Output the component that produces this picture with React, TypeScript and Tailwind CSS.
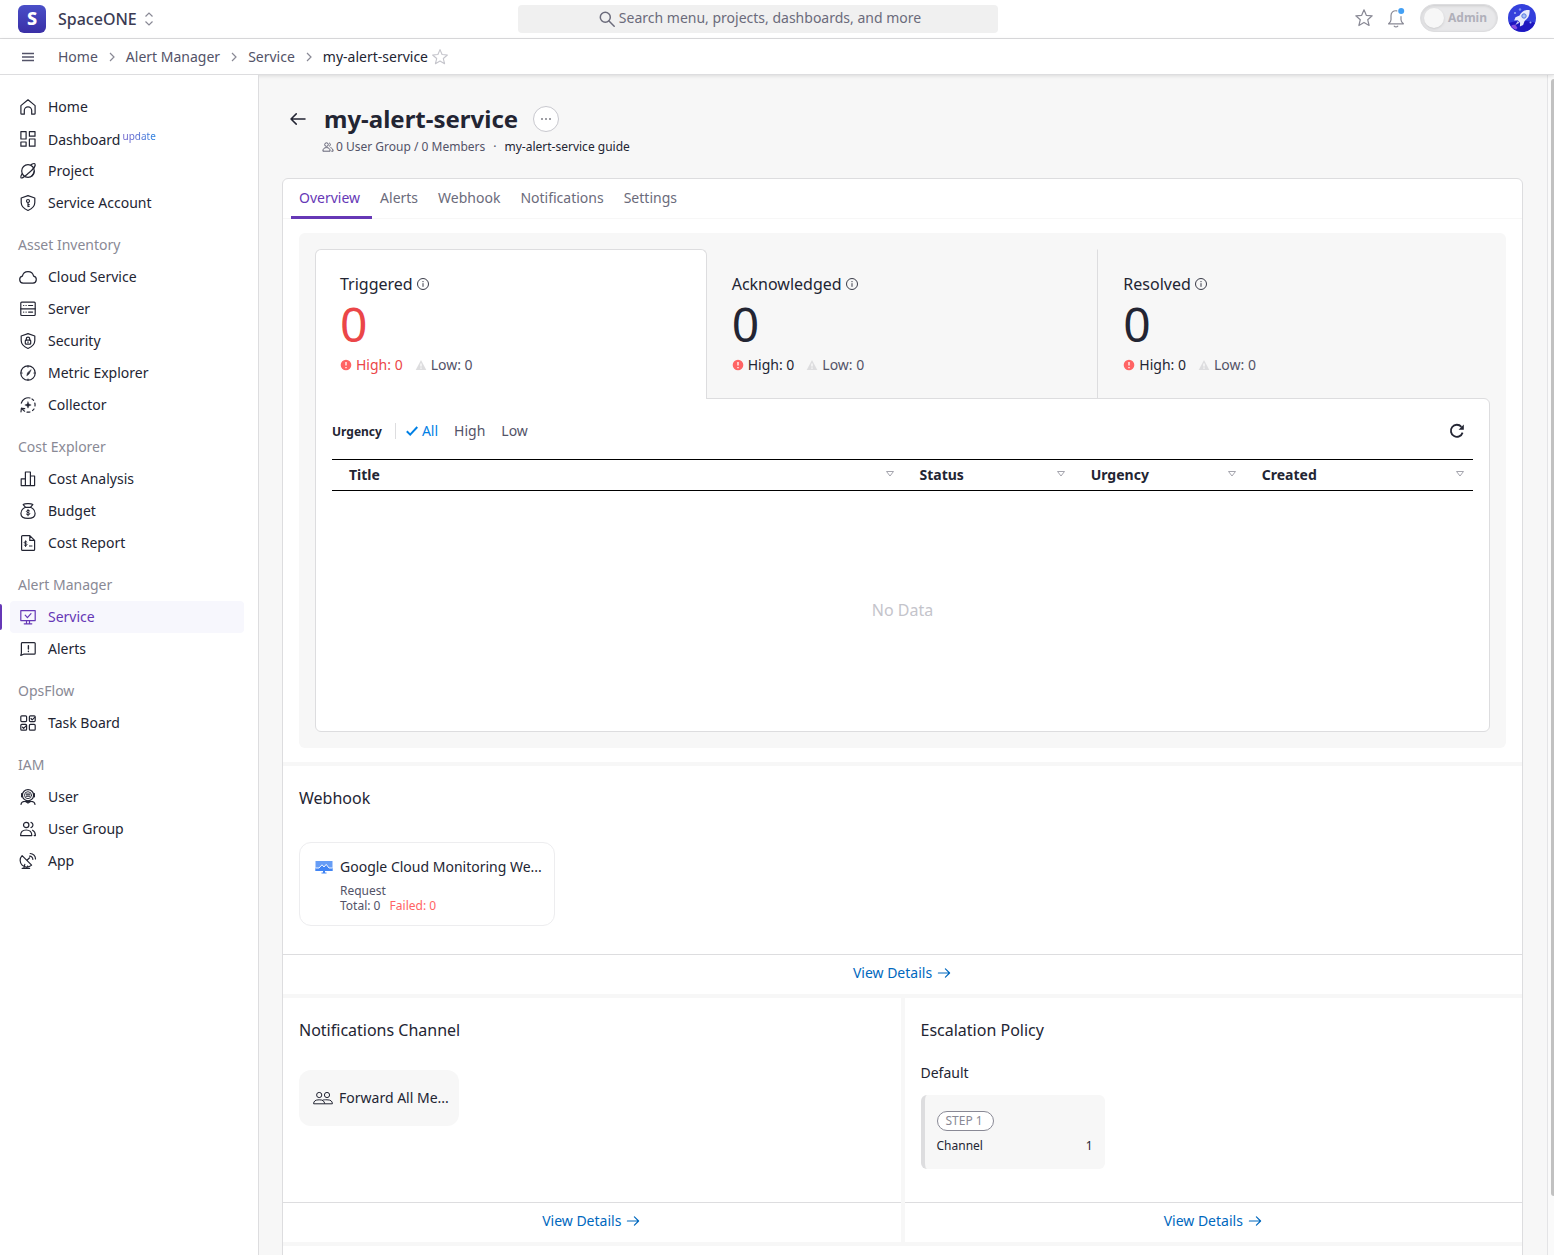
import React from "react";

interface IconProps {
  className?: string;
}

interface MenuItem {
  label: string;
  icon: React.ReactNode;
  tag?: string;
  active?: boolean;
}

interface MenuSection {
  title?: string;
  items: MenuItem[];
}

function LineIcon({ children }: { children: React.ReactNode }) {
  return (
    <svg
      viewBox="0 0 20 20"
      className="h-5 w-5 shrink-0"
      fill="none"
      stroke="currentColor"
      strokeWidth="1.2"
      strokeLinecap="round"
      strokeLinejoin="round"
      aria-hidden="true"
    >
      {children}
    </svg>
  );
}

const SHIELD = "M10 2.6 16.8 5v4.6c0 3.6-2.8 6.3-6.8 7.9-4-1.6-6.8-4.3-6.8-7.9V5z";

const MENU: MenuSection[] = [
  {
    items: [
      {
        label: "Home",
        icon: (
          <LineIcon>
            <path d="M2.9 8.6 10 2.8l7.1 5.8v7.8a.8.8 0 0 1-.8.8h-2.6v-3.6a3.7 3.7 0 0 0-7.4 0v3.6H3.7a.8.8 0 0 1-.8-.8z" />
          </LineIcon>
        ),
      },
      {
        label: "Dashboard",
        tag: "update",
        icon: (
          <LineIcon>
            <rect x="2.9" y="2.6" width="5.2" height="7.4" />
            <rect x="11.4" y="2.6" width="5.6" height="4.6" />
            <rect x="2.9" y="13" width="5.2" height="4.2" />
            <rect x="11.4" y="10" width="5.6" height="7.2" />
          </LineIcon>
        ),
      },
      {
        label: "Project",
        icon: (
          <LineIcon>
            <circle cx="10" cy="10" r="6.3" />
            <path d="M13.2 3.6c2-1.1 3.4-1.3 3.8-.6.9 1.5-1.8 5.4-6 8.8-4.2 3.4-7.2 6.2-8.1 4.9-.4-.7 0-2 1-3.6" />
            <path d="M13.8 15c1.3-1.3 2.3-3 2.5-5" />
          </LineIcon>
        ),
      },
      {
        label: "Service Account",
        icon: (
          <LineIcon>
            <path d={SHIELD} />
            <circle cx="10" cy="8" r="1.5" />
            <path d="M10 9.6v4M10 11.7h1.2M10 13.5h1.2" />
          </LineIcon>
        ),
      },
    ],
  },
  {
    title: "Asset Inventory",
    items: [
      {
        label: "Cloud Service",
        icon: (
          <LineIcon>
            <path d="M5 16.1a3.5 3.5 0 0 1-.6-6.9 5.7 5.7 0 0 1 11.2 0 3.5 3.5 0 0 1-.6 6.9z" />
          </LineIcon>
        ),
      },
      {
        label: "Server",
        icon: (
          <LineIcon>
            <rect x="2.8" y="3.1" width="14.4" height="13.4" rx="1" />
            <path d="M2.8 9.8h14.4M5.6 6.5h.2M8 6.5h.2M10.6 6.5h4M5.6 13.1h.2M8 13.1h.2M10.6 13.1h4" />
          </LineIcon>
        ),
      },
      {
        label: "Security",
        icon: (
          <LineIcon>
            <path d={SHIELD} />
            <rect x="7.3" y="9.2" width="5.4" height="4" rx=".8" />
            <path d="M8.3 9V7.8a1.7 1.7 0 0 1 3.4 0V9M10 10.8v.8" />
          </LineIcon>
        ),
      },
      {
        label: "Metric Explorer",
        icon: (
          <LineIcon>
            <circle cx="10" cy="10" r="7.2" />
            <path d="M10 3.1v1M10 16v1M3.1 10h1M16 10h1" />
            <path d="m13 7-2 4-2.2 1.7L9.5 10z" fill="currentColor" strokeWidth=".6" />
          </LineIcon>
        ),
      },
      {
        label: "Collector",
        icon: (
          <LineIcon>
            <path d="M3.3 8.1A7.2 7.2 0 0 1 12 3M14 4a7 7 0 0 1 1.6 1.4M16.8 8a7 7 0 0 1 .2 3M16 14a7 7 0 0 1-1.5 1.5M12 17a7 7 0 0 1-3 .1M6.6 16.2a7 7 0 0 1-2.8-3M3 16.8l.4-3.5 3.3.4" />
            <path
              d="m10 6.8.9 2.3 2.3.9-2.3.9-.9 2.3-.9-2.3L6.8 10l2.3-.9z"
              fill="currentColor"
              strokeWidth=".4"
            />
          </LineIcon>
        ),
      },
    ],
  },
  {
    title: "Cost Explorer",
    items: [
      {
        label: "Cost Analysis",
        icon: (
          <LineIcon>
            <path d="M3.2 16.6V9.8h4.2M7.4 16.6V3h5v13.6M12.4 7h4.2v9.6H3.2" />
          </LineIcon>
        ),
      },
      {
        label: "Budget",
        icon: (
          <LineIcon>
            <path d="M7.4 6.3C4.4 7.7 2.9 10 2.9 12.4c0 3 2.5 4.9 7.1 4.9s7.1-1.9 7.1-4.9c0-2.4-1.5-4.7-4.5-6.1zM7.4 6.2 5.2 3.6c1.5-1 2.8-.9 4.8-.9s3.3-.1 4.8.9l-2.2 2.6" />
            <path d="M11.7 9.9c-.5-.7-3.3-.8-3.3.6s3.4.7 3.4 2.2-3 1.3-3.5.4M10 8.5v6.3" strokeWidth="1" />
          </LineIcon>
        ),
      },
      {
        label: "Cost Report",
        icon: (
          <LineIcon>
            <path d="M3.6 3.6a1 1 0 0 1 1-1h7.2l4.8 4.8v9a1 1 0 0 1-1 1h-11a1 1 0 0 1-1-1zM11.8 2.8v4.6h4.6" />
            <path d="M8.9 9c-.5-.7-2.7-.6-2.7.6s2.8.7 2.8 2-2.4 1.2-2.9.4M7.6 7.8v5.8M11.4 13h2.6" strokeWidth="1" />
          </LineIcon>
        ),
      },
    ],
  },
  {
    title: "Alert Manager",
    items: [
      {
        label: "Service",
        active: true,
        icon: (
          <LineIcon>
            <rect x="2.8" y="3.6" width="14.4" height="10" />
            <path d="M7.2 8.2 9.4 10.7 13 6.6M8.5 13.8v2.8M11.5 13.8v2.8M6.2 16.8h7.6" />
          </LineIcon>
        ),
      },
      {
        label: "Alerts",
        icon: (
          <LineIcon>
            <path d="M4.2 3.6h12a1 1 0 0 1 1 1v9.6a1 1 0 0 1-1 1H5.6l-2.8 1.2.6-2.2V4.6a1 1 0 0 1 .8-1z" />
            <path d="M10.4 6.6v3.4M10.4 12.3v.2" strokeWidth="1.4" />
          </LineIcon>
        ),
      },
    ],
  },
  {
    title: "OpsFlow",
    items: [
      {
        label: "Task Board",
        icon: (
          <LineIcon>
            <rect x="2.8" y="2.8" width="5.8" height="5.8" rx="1" />
            <rect x="11.4" y="2.8" width="5.8" height="5.8" rx="1" />
            <rect x="2.8" y="11.4" width="5.8" height="5.8" rx="1" />
            <rect x="11.4" y="11.4" width="5.8" height="5.8" rx="1" />
            <path d="m13 5.5 1.2 1.3 2.5-2.5M4.4 14.1l1.2 1.3 2.5-2.5" />
          </LineIcon>
        ),
      },
    ],
  },
  {
    title: "IAM",
    items: [
      {
        label: "User",
        icon: (
          <LineIcon>
            <circle cx="10" cy="8.2" r="5.6" />
            <circle cx="10" cy="8.2" r="3.5" strokeWidth=".9" />
            <path d="M3.6 6.6v3.2M16.4 6.6v3.2M8.4 7.2h3.2M8.4 9.2h3.2M3 17.3c.3-2 1.8-3 4-3h6c2.2 0 3.7 1 4 3M7 14.3l3 1.8 3-1.8" />
          </LineIcon>
        ),
      },
      {
        label: "User Group",
        icon: (
          <LineIcon>
            <circle cx="8.2" cy="6" r="2.7" />
            <path d="M2.6 16.6c0-3.6 2-5.6 5.6-5.6s5.6 2 5.6 5.6zM13 3.4a2.7 2.7 0 0 1 0 5.2M14.6 11.2c1.8.9 2.8 2.8 2.8 5.4h-1.2" />
          </LineIcon>
        ),
      },
      {
        label: "App",
        icon: (
          <LineIcon>
            <path d="M4.1 4.6a6.7 6.7 0 0 0 9.5 9.5zM9 9.2l2.6-2.4M4.2 17.4h7.4M5.8 17.2l1-3.8M10.4 17.2l-.8-2.2" />
            <path d="M11.6 5.2a3 3 0 0 1 3.2 3.2M12.2 2.5a5.4 5.4 0 0 1 5.3 5.5" />
          </LineIcon>
        ),
      },
    ],
  },
];

const CRUMBS = ["Home", "Alert Manager", "Service"];

const TABS = ["Overview", "Alerts", "Webhook", "Notifications", "Settings"];

const ALERT_STATES = [
  { label: "Triggered", total: 0, high: 0, low: 0 },
  { label: "Acknowledged", total: 0, high: 0, low: 0 },
  { label: "Resolved", total: 0, high: 0, low: 0 },
];

const COLUMNS = [
  { label: "Title", width: "w-[50%]" },
  { label: "Status", width: "w-[15%]" },
  { label: "Urgency", width: "w-[15%]" },
  { label: "Created", width: "w-[20%]" },
];

function StarIcon({ className }: IconProps) {
  return (
    <svg viewBox="0 0 20 20" className={className} fill="none" stroke="currentColor" strokeWidth="1.2" strokeLinejoin="round" aria-hidden="true">
      <path d="m10 1.8 2.3 5.5 5.9.5-4.5 3.9 1.4 5.8-5.1-3.1-5.1 3.1 1.4-5.8-4.5-3.9 5.9-.5z" />
    </svg>
  );
}

function ArrowIcon({ className }: IconProps) {
  return (
    <svg viewBox="0 0 16 16" className={className} fill="none" stroke="currentColor" strokeWidth="1.2" strokeLinecap="round" strokeLinejoin="round" aria-hidden="true">
      <path d="M2.4 8h11.2M9.4 3.9 13.6 8l-4.2 4.1" />
    </svg>
  );
}

function InfoIcon() {
  return (
    <svg viewBox="0 0 14 14" className="h-3.5 w-3.5" fill="none" stroke="currentColor" strokeWidth=".9" aria-hidden="true">
      <circle cx="7" cy="7" r="5.5" />
      <path d="M7 6.2v3.6M7 4v1.2" />
    </svg>
  );
}

function HighIcon() {
  return (
    <svg viewBox="0 0 12 12" className="h-3 w-3" aria-hidden="true">
      <circle cx="6" cy="6" r="5.3" fill="#ff6464" />
      <path d="M6 3v3.4M6 8v1.2" stroke="#fff" strokeWidth="1.3" />
    </svg>
  );
}

function LowIcon() {
  return (
    <svg viewBox="0 0 12 12" className="h-3 w-3" aria-hidden="true">
      <path d="M6 1 11.3 11H.7z" fill="#dddddf" />
      <path d="M6 4.5v3M6 8.5v1.2" stroke="#fff" strokeWidth="1.2" />
    </svg>
  );
}

function TopBar() {
  return (
    <header className="flex h-[39px] shrink-0 items-center border-b border-[#dddddf] bg-white px-[18px]">
      <div className="grid flex-1 grid-cols-[1fr_480px_1fr] items-center">
        <div className="flex items-center">
          <span className="flex h-7 w-7 items-center justify-center rounded-md bg-linear-to-b from-[#4a4fc8] to-[#3a2fa6] pb-0.5 text-lg font-extrabold text-white">
            S
          </span>
          <button type="button" className="ml-3 flex items-center gap-2 text-base font-medium text-[#3b3b53]">
            SpaceONE
            <svg viewBox="0 0 8 14" className="h-3.5 w-2" fill="none" stroke="#898995" strokeWidth="1.2" aria-hidden="true">
              <path d="M.5 4.5 4 1l3.5 3.5M.5 9.5 4 13l3.5-3.5" />
            </svg>
          </button>
        </div>
        <button type="button" className="flex h-7 items-center justify-center gap-1 rounded-sm bg-[#f0f0f0] pb-0.5 pl-1 text-sm text-[#6b6b7b]">
          <svg viewBox="0 0 16 16" className="mt-0.5 h-4 w-4" fill="none" stroke="currentColor" strokeWidth="1.5" strokeLinecap="round" aria-hidden="true">
            <circle cx="6.3" cy="6.3" r="5" />
            <path d="m10 10 5.2 5.2" />
          </svg>
          Search menu, projects, dashboards, and more
        </button>
        <div className="flex items-center justify-end pb-0.5">
          <button type="button" aria-label="Favorites" className="mr-3 text-[#898995]">
            <StarIcon className="h-5 w-5" />
          </button>
          <button type="button" aria-label="Notices" className="mr-3.5 text-[#898995]">
            <svg viewBox="0 0 20 20" className="h-5 w-5" fill="none" stroke="currentColor" strokeWidth="1.2" strokeLinecap="round" strokeLinejoin="round" aria-hidden="true">
              <path d="M10.8 2.8C7.2 2.3 5 4.6 5 7.6v4.2c0 1.6-.6 2.7-2.4 4h14.8c-1.8-1.3-2.4-2.4-2.4-4V8.6M8.2 18.2c.9.9 2.7.9 3.6 0" />
              <circle cx="15.2" cy="3" r="3" fill="#43a0f5" stroke="none" />
            </svg>
          </button>
          <button
            type="button"
            role="switch"
            aria-checked="false"
            className="flex h-7 w-[78px] items-center gap-1 rounded-full border border-[#dddddf] bg-[#e8e8ea] pl-[3px] text-xs font-bold text-[#b0b0ba] shadow-[inset_0_1px_3px_rgba(0,0,0,0.12)]"
          >
            <span className="h-5 w-5 rounded-full bg-[#f7f7f7] shadow-sm" />
            Admin
          </button>
        </div>
      </div>
      <button type="button" aria-label="Account" className="ml-2.5 pb-0.5">
        <svg viewBox="0 0 28 28" className="h-7 w-7" aria-hidden="true">
          <circle cx="14" cy="14" r="14" fill="#3440dc" />
          <path d="M1 19a14 14 0 0 0 26 0c-7-3-18-3-26 0z" fill="#1f17c0" />
          <path d="M3 22c1.5-1.2 3-1.6 4.500-1l2 3-1.500 1.500c-2-.6-3.600-1.800-5-3.500z" fill="#8a4fe0" />
          <path d="M21.5 5.500c-4.500.2-8 2-10 6l-4 1.700-1.300 3.300 3.600-.3 2.300 2.600-.2 3.700 3.200-1.400 1.500-4.200c4-2.500 5.500-6.500 4.900-11.400z" fill="#e9ecfb" />
          <circle cx="16" cy="12" r="2.2" fill="#a9c3f7" stroke="#5c7be0" />
          <path d="m9.8 17-2.5 4 4.2-2.2z" fill="#c6c9f2" />
          <circle cx="7" cy="9" r="1" fill="#9db0f5" />
          <circle cx="12" cy="5.5" r="1.2" fill="#7f8ff0" />
          <circle cx="22.5" cy="18.5" r="1" fill="#9db0f5" />
        </svg>
      </button>
    </header>
  );
}

function Breadcrumbs() {
  return (
    <div className="relative z-10 flex h-9 shrink-0 items-center border-b border-[#dddddf] bg-white px-[18px] text-sm text-[#535368] shadow-[0_1px_4px_rgba(0,0,0,0.12)]">
      <button type="button" aria-label="Toggle menu" className="mr-5">
        <svg viewBox="0 0 20 20" className="h-5 w-5" stroke="currentColor" strokeWidth="1.4" aria-hidden="true">
          <path d="M4 6.5h12M4 10h12M4 13.5h12" />
        </svg>
      </button>
      <nav aria-label="Breadcrumb" className="flex items-center">
        {CRUMBS.map((crumb) => (
          <React.Fragment key={crumb}>
            <a href="#">{crumb}</a>
            <svg viewBox="0 0 8 12" className="mx-2.5 h-3 w-2" fill="none" stroke="#898995" strokeWidth="1.2" aria-hidden="true">
              <path d="m2 2 4 4-4 4" />
            </svg>
          </React.Fragment>
        ))}
        <span className="text-[#232533]">my-alert-service</span>
      </nav>
      <button type="button" aria-label="Add to favorites" className="ml-[3px] text-[#c4c4cb]">
        <StarIcon className="h-[18px] w-[18px]" />
      </button>
    </div>
  );
}

function Sidebar() {
  return (
    <aside className="z-20 w-[259px] shrink-0 border-r border-[#dddddf] bg-white pt-4 text-sm text-[#232533]">
      {MENU.map((section, i) => (
        <div key={section.title ?? i}>
          {section.title && (
            <h2 className="mt-2.5 flex h-8 items-center pl-[18px] text-[#898995]">
              {section.title}
            </h2>
          )}
          {section.items.map((item) => (
            <div key={item.label} className="flex h-8 items-center pr-3.5">
              <span
                className={
                  item.active
                    ? "mr-2 h-[26px] w-0.5 rounded-r-sm bg-[#6638b6]"
                    : "mr-2 w-0.5"
                }
              />
              <a
                href="#"
                className={
                  item.active
                    ? "flex h-8 flex-1 items-center gap-2.5 rounded-sm bg-[#f7f7fd] pl-2 text-[#6638b6]"
                    : "flex h-8 flex-1 items-center gap-2.5 pl-2"
                }
              >
                {item.icon}
                {item.tag ? (
                  <span className="pt-0.5">
                    {item.label}
                    <sup className="ml-0.5 bg-linear-to-r from-[#6d5bc8] to-[#1c80e0] bg-clip-text text-[10px] text-transparent">
                      {item.tag}
                    </sup>
                  </span>
                ) : (
                  <span>{item.label}</span>
                )}
              </a>
            </div>
          ))}
        </div>
      ))}
    </aside>
  );
}

function ServiceHeading() {
  return (
    <div className="pl-1.5">
      <div className="flex h-[30px] items-center">
        <button type="button" aria-label="Go back" className="text-[#232533]">
          <ArrowIcon className="h-5 w-5 rotate-180" />
        </button>
        <h1 className="ml-4 text-2xl font-bold text-[#232533]">my-alert-service</h1>
        <button
          type="button"
          aria-label="More actions"
          className="ml-[15px] flex h-[26px] w-[26px] items-center justify-center rounded-full border border-[#c8c8ce] bg-white"
        >
          <svg viewBox="0 0 12 4" className="h-1 w-3" fill="#232533" aria-hidden="true">
            <circle cx="2" cy="2" r=".8" />
            <circle cx="6" cy="2" r=".8" />
            <circle cx="10" cy="2" r=".8" />
          </svg>
        </button>
      </div>
      <p className="mt-1 flex h-[18px] items-center pl-[34px] text-xs text-[#535368]">
        <svg viewBox="0 0 20 20" className="mr-0.5 h-3 w-3" fill="none" stroke="currentColor" strokeWidth="1.5" aria-hidden="true">
          <circle cx="7.5" cy="6" r="3" />
          <path d="M1.5 17c0-4 2-6 6-6s6 2 6 6zM12 3.2a3 3 0 0 1 0 5.6M14 11c3 .8 4.5 3 4.5 6h-3" />
        </svg>
        0 User Group / 0 Members
        <span className="mx-2">·</span>
        <span className="text-[#232533]">my-alert-service guide</span>
      </p>
    </div>
  );
}

function AlertStates() {
  return (
    <div className="grid grid-cols-3">
      {ALERT_STATES.map((state, i) => (
        <button
          key={state.label}
          type="button"
          className={
            i === 0
              ? "relative z-10 -mb-px flex h-[150px] flex-col items-start rounded-t-md border border-b-0 border-[#dddddf] bg-white px-6 pt-[22px]"
              : i === 1
                ? "-mb-px flex h-[150px] flex-col items-start border border-transparent border-r-[#dddddf] px-6 pt-[22px]"
                : "-mb-px flex h-[150px] flex-col items-start border border-transparent px-6 pt-[22px]"
          }
        >
          <span className="flex h-6 items-center gap-[3px] text-base text-[#232533]">
            {state.label}
            <InfoIcon />
          </span>
          <span
            className={
              i === 0
                ? "mt-1 text-5xl leading-[48px] text-[#eb4648]"
                : "mt-1 text-5xl leading-[48px] text-[#232533]"
            }
          >
            {state.total}
          </span>
          <span className="mt-[7px] flex h-5 items-center text-sm text-[#535368]">
            <HighIcon />
            <span className={i === 0 ? "mr-3 ml-1 text-[#eb4648]" : "mr-3 ml-1 text-[#232533]"}>
              High: {state.high}
            </span>
            <LowIcon />
            <span className="ml-1">Low: {state.low}</span>
          </span>
        </button>
      ))}
    </div>
  );
}

function AlertTable() {
  return (
    <div className="h-[334px] rounded-md rounded-tl-none border border-[#dddddf] bg-white px-4 pt-4">
      <div className="flex h-8 items-center text-sm text-[#535368]">
        <span className="pt-0.5 text-xs font-bold text-[#232533]">Urgency</span>
        <span className="mr-2.5 ml-[13px] h-4 w-px bg-[#dddddf]" />
        <button type="button" className="flex items-center gap-1 text-[#0080e5]">
          <svg viewBox="0 0 12 12" className="h-3 w-3" fill="none" stroke="currentColor" strokeWidth="2" aria-hidden="true">
            <path d="m.8 6.2 3.4 3.4L11.3 2" />
          </svg>
          All
        </button>
        <button type="button" className="ml-4">High</button>
        <button type="button" className="ml-4">Low</button>
        <button type="button" aria-label="Refresh" className="mr-2 ml-auto text-[#232533]">
          <svg viewBox="0 0 16 16" className="h-4 w-4" aria-hidden="true">
            <path d="M13.6 9.6A6 6 0 1 1 12.4 3.8" fill="none" stroke="currentColor" strokeWidth="1.8" />
            <path d="M14.8 1.6v5.2H9.6z" fill="currentColor" />
          </svg>
        </button>
      </div>
      <table className="mt-3 w-full table-fixed">
        <thead>
          <tr className="h-[31px] border-y border-black">
            {COLUMNS.map((column) => (
              <th key={column.label} scope="col" className={`${column.width} pr-2 pl-[17px] text-left text-sm font-bold text-[#232533]`}>
                <span className="flex items-center justify-between">
                  {column.label}
                  <svg viewBox="0 0 10 8" className="mb-0.5 h-2 w-2.5" fill="none" stroke="#a5a5ae" aria-hidden="true">
                    <path d="M1.5 1.5h7L5 6z" />
                  </svg>
                </span>
              </th>
            ))}
          </tr>
        </thead>
        <tbody>
          <tr>
            <td colSpan={4} className="h-[238px] text-center text-base text-[#c4c4cb]">
              No Data
            </td>
          </tr>
        </tbody>
      </table>
    </div>
  );
}

function ViewDetails() {
  return (
    <div className="flex h-10 items-center justify-center border-t border-[#dddddf] pb-1">
      <a href="#" className="flex items-center gap-1 text-sm text-[#0068be]">
        View Details
        <ArrowIcon className="h-4 w-4" />
      </a>
    </div>
  );
}

function WebhookSection() {
  return (
    <section className="border-t-4 border-[#f7f7f7]">
      <div className="h-[188px] px-4 pt-5">
        <h3 className="text-base text-[#232533]">Webhook</h3>
        <div className="mt-8 flex h-[84px] w-64 items-start gap-[7px] rounded-xl border border-[#ededef] pt-3.5 pl-[15px]">
          <svg viewBox="0 0 18 14" className="mt-[3px] h-3.5 w-[18px] shrink-0" aria-hidden="true">
            <path d="M.5 1h17v10H.5z" fill="#669df6" />
            <path d="M8 11h2v1.5h1.5v1h-5v-1H8z" fill="#4285f4" />
            <path d="M.5 8H4l3-3 2 2 2-2 3 3h3.5v3H.5z" fill="#4285f4" />
            <path d="M.5 8H4l3-3.2 2 2.2 2.2-2.600L14 8h3.5" fill="none" stroke="#fff" strokeWidth=".9" />
          </svg>
          <div className="whitespace-nowrap">
            <p className="text-sm text-[#232533]">Google Cloud Monitoring We...</p>
            <p className="mt-1.5 text-xs leading-[15px] text-[#535368]">
              Request
              <br />
              Total: 0 <span className="ml-1.5 text-[#ff6464]">Failed: 0</span>
            </p>
          </div>
        </div>
      </div>
      <ViewDetails />
    </section>
  );
}

function ChannelSection() {
  return (
    <section>
      <div className="h-[204px] px-4 pt-5">
        <h3 className="text-base text-[#232533]">Notifications Channel</h3>
        <div className="mt-7 flex h-14 w-40 items-center gap-1.5 rounded-xl bg-[#f7f7f7] pl-3.5">
          <svg viewBox="0 0 20 14" className="h-3.5 w-5 shrink-0" fill="none" stroke="#232533" aria-hidden="true">
            <circle cx="6.2" cy="4" r="2.6" />
            <circle cx="14" cy="4" r="2.6" />
            <path d="M.6 12.8c0-2.7 1.8-4 5.6-4s4.8 1.2 5.6 4zM9.5 9.2c1-.4 2.5-.5 4.5-.4 3.6 0 5.4 1.3 5.4 4h-7.6" />
          </svg>
          <span className="text-sm whitespace-nowrap text-[#232533]">Forward All Me...</span>
        </div>
      </div>
      <ViewDetails />
    </section>
  );
}

function EscalationSection() {
  return (
    <section>
      <div className="h-[204px] px-4 pt-5">
        <h3 className="text-base text-[#232533]">Escalation Policy</h3>
        <p className="mt-[21px] text-sm text-[#232533]">Default</p>
        <div className="mt-3 h-[74px] w-[184px] rounded-md border-l-4 border-[#dddddf] bg-[#f7f7f7] pt-4 pr-3 pl-3 text-xs text-[#232533]">
          <span className="inline-flex h-5 items-center rounded-full border border-[#898995] bg-white pr-2.5 pl-2 text-[#898995]">
            STEP 1
          </span>
          <p className="mt-[7px] flex justify-between">
            <span>Channel</span>
            <span>1</span>
          </p>
        </div>
      </div>
      <ViewDetails />
    </section>
  );
}

export default function App() {
  return (
    <div className="flex h-screen flex-col overflow-hidden bg-white font-['Noto_Sans',sans-serif]">
      <TopBar />
      <Breadcrumbs />
      <div className="flex min-h-0 flex-1">
        <Sidebar />
        <main className="min-w-0 flex-1 overflow-hidden bg-[#f7f7f7] pt-[29px] pr-6 pl-[23px]">
          <ServiceHeading />
          <div className="mt-[22px] min-h-full rounded-t-md border border-[#dddddf] bg-white">
            <div role="tablist" className="flex h-10 border-b border-[#f7f7f7] pl-2 text-sm text-[#6b6b7b]">
              {TABS.map((tab, i) => (
                <button
                  key={tab}
                  type="button"
                  role="tab"
                  aria-selected={i === 0}
                  className={
                    i === 0
                      ? "-mb-px border-b-3 border-[#6638b6] pr-3 pl-2 text-[#6638b6]"
                      : "-mb-px border-b-3 border-transparent pr-3 pl-2"
                  }
                >
                  {tab}
                </button>
              ))}
            </div>
            <div className="mx-4 mt-3.5 mb-3.5 rounded-md bg-[#f7f7f7] p-4">
              <AlertStates />
              <AlertTable />
            </div>
            <WebhookSection />
            <div className="grid grid-cols-2 gap-1 border-y-4 border-[#f7f7f7] bg-[#f7f7f7] *:bg-white">
              <ChannelSection />
              <EscalationSection />
            </div>
          </div>
        </main>
        {/* scroll track */}
        <div className="w-[7px] shrink-0 border-l border-[#e4e4e6] bg-[#fafafa] pt-1 pl-[3px]">
          <div className="h-[95%] rounded-l-sm bg-[#c1c1c1]" />
        </div>
      </div>
    </div>
  );
}
